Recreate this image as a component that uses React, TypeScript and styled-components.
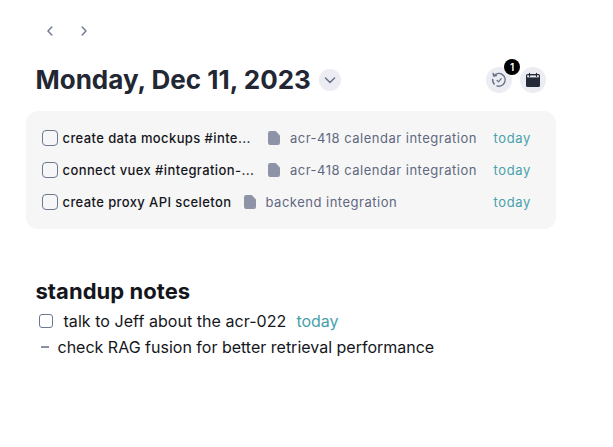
import React from 'react';
import styled, { createGlobalStyle } from 'styled-components';

const Global = createGlobalStyle`
  * { box-sizing: border-box; }
  body { margin: 0; background: #fff; font-family: Inter, sans-serif; color: #15161c; -webkit-font-smoothing: antialiased; }
`;
const Page = styled.main`
  width: 613px; height: 447px; padding: 20px 57px 0 26px;
  display: flex; flex-direction: column;
`;
const Nav = styled.nav`display: flex; gap: 12px; padding-left: 13px; height: 22px; align-items: center;`;
const NavButton = styled.button`
  width: 22px; height: 22px; border: 0; padding: 0; background: none;
  color: #717b92; display: grid; place-items: center;
`;
const Header = styled.header`display: flex; align-items: center; height: 36px; margin-top: 20px; padding: 0 10px 0 9.5px;`;
const Title = styled.h1`
  margin: 0 8px 0 0; font-size: 26px; line-height: 36px; font-weight: 700;
  white-space: nowrap; color: #222733;
`;
const Round = styled.button<{ $size: number }>`
  width: ${p => p.$size}px; height: ${p => p.$size}px; border-radius: 50%; border: 0; padding: 0;
  background: #ecedf2; color: #68718a; display: grid; place-items: center; position: relative;
`;
const Actions = styled.div`display: flex; gap: 8px; margin-left: auto;`;
const Badge = styled.span`
  position: absolute; top: -8px; right: -8px; width: 16px; height: 16px; border-radius: 50%;
  background: #000; color: #fff; font: 600 10px/16px Inter, sans-serif; text-align: center;
`;
const Panel = styled.section`
  margin-top: 13px; height: 118px; border-radius: 12px;
  background: #f6f6f6; padding: 11px 25px 11px 16px;
`;
const Task = styled.div`height: 32px; display: flex; align-items: center; font-size: 13px; letter-spacing: 0.5px;`;
const Box = styled.span<{ $size: number; $radius: number }>`
  width: ${p => p.$size}px; height: ${p => p.$size}px; border: 1px solid #6b7891;
  border-radius: ${p => p.$radius}px; flex: none;
`;
const Name = styled.span<{ $clipped: boolean }>`
  margin-left: 4.5px; width: ${p => (p.$clipped ? '193.5px' : 'auto')};
  font-weight: 500; letter-spacing: 0.4px; white-space: nowrap;
`;
const Doc = styled.span`
  margin-left: 12px; display: flex; align-items: center; gap: 10px;
  color: #5f6880; white-space: nowrap;
`;
const Due = styled.span`color: #47a1ab;`;
const TaskDue = styled(Due)`margin-left: auto; letter-spacing: 0.65px;`;
const Notes = styled.section`margin-top: 48px; padding-left: 9.5px;`;
const Heading = styled.h2`margin: 0 0 3px; font-size: 22px; line-height: 28px; font-weight: 700; letter-spacing: 0.05px;`;
const Line = styled.div`
  display: flex; align-items: center; height: 26px; padding-left: 3.5px;
  font-size: 16px; white-space: nowrap;
`;
const TodoText = styled.span`margin: 0 10px 0 10.5px; letter-spacing: 0.05px;`;
const Dash = styled.span`width: 8px; height: 1.5px; margin: 0 8.5px 0 2px; background: #8991a3;`;

const Chevron = ({ d }: { d: string }) => (
  <svg width="12" height="12" viewBox="0 0 12 12" fill="none" stroke="currentColor" strokeWidth="1.5" strokeLinecap="round" strokeLinejoin="round">
    <path d={d} />
  </svg>
);

const DocIcon = () => (
  <svg width="12" height="14" viewBox="0 0 12 14">
    <path d="M2.3 0H7.7L12 4.4V11.7Q12 14 9.7 14H2.3Q0 14 0 11.7V2.3Q0 0 2.3 0Z" fill="#8e93a8" />
  </svg>
);

const HistoryIcon = () => (
  <svg width="16" height="16" viewBox="0 0 16 16" fill="none" stroke="currentColor" strokeWidth="1.5" strokeLinecap="round" strokeLinejoin="round">
    <path d="M3.3 3.5A6.3 6.3 0 1 1 6 13.9" />
    <path d="M2.2 1.4L2.7 4L5.4 3.6" />
    <path d="M1.6 7.4L1.7 8.7C1.9 10 2.4 11 3.2 12" />
    <path d="M6 8.4L7.5 9.9L10.2 6.7" strokeWidth="1.3" />
  </svg>
);

const CalendarIcon = () => (
  <svg width="16" height="16" viewBox="0 0 16 16" fill="none">
    <rect x="1" y="2" width="14" height="13" rx="1.6" fill="#252b36" />
    <path d="M2.2 3.2H13.8V5.4H2.2Z" fill="#ecedf2" />
    <path d="M4.5 1.4V4.3M11.5 1.4V4.3M4.5 2.6H11.5" stroke="#252b36" strokeWidth="1.2" strokeLinecap="round" />
  </svg>
);

const tasks = [
  { name: 'create data mockups #inte...', doc: 'acr-418 calendar integration', clipped: true },
  { name: 'connect vuex #integration-...', doc: 'acr-418 calendar integration', clipped: true },
  { name: 'create proxy API sceleton', doc: 'backend integration', clipped: false },
];

export default function App() {
  return (
    <>
      <Global />
      <Page>
        <Nav>
          <NavButton aria-label="Previous day"><Chevron d="M7.8 2L4 6L7.8 10" /></NavButton>
          <NavButton aria-label="Next day"><Chevron d="M4.2 2L8 6L4.2 10" /></NavButton>
        </Nav>
        <Header>
          <Title>Monday, Dec 11, 2023</Title>
          <Round $size={22} aria-label="Choose date"><Chevron d="M1.5 4L6 8.5L10.5 4" /></Round>
          <Actions>
            <Round $size={26} aria-label="Scheduled tasks"><HistoryIcon /><Badge>1</Badge></Round>
            <Round $size={26} aria-label="Calendar"><CalendarIcon /></Round>
          </Actions>
        </Header>
        <Panel>
          {tasks.map(task => (
            <Task key={task.name}>
              <Box $size={16} $radius={4} />
              <Name $clipped={task.clipped}>{task.name}</Name>
              <Doc><DocIcon />{task.doc}</Doc>
              <TaskDue>today</TaskDue>
            </Task>
          ))}
        </Panel>
        <Notes>
          <Heading>standup notes</Heading>
          <Line><Box $size={14} $radius={3} /><TodoText>talk to Jeff about the acr-022</TodoText><Due>today</Due></Line>
          <Line><Dash />check RAG fusion for better retrieval performance</Line>
        </Notes>
      </Page>
    </>
  );
}
